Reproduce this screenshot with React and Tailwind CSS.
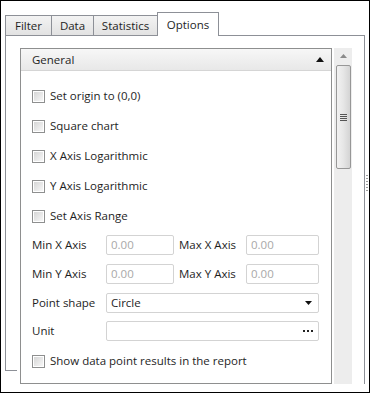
import React from 'react';

const font = { fontFamily: '"Open Sans", "Noto Sans", sans-serif' };

function Check({ label }) {
  return (
    <div className="flex items-center h-[30px]">
      <span className="w-[13px] h-[13px] border border-[#8e8f8f] bg-white p-[1px] shrink-0">
        <span className="block w-full h-full bg-gradient-to-br from-[#d6d6d6] to-[#f7f7f7]" />
      </span>
      <span className="ml-[5px] text-[#1e1e1e]">{label}</span>
    </div>
  );
}

function NumField({ width }) {
  return (
    <div className={`h-[20px] ${width} border border-[#d3d3d3] rounded-[2px] bg-white flex items-center pl-[4px] text-[#a8a8a8]`}>
      0.00
    </div>
  );
}

function Tab({ label, width, first }) {
  return (
    <div
      className={`h-[20px] ${width} ${first ? '' : '-ml-[1px]'} flex items-center justify-center bg-gradient-to-b from-[#f3f3f3] to-[#e2e2e2] border border-b-0 border-[#8d9097] text-[#1e1e1e]`}
    >
      {label}
    </div>
  );
}

export default function App() {
  return (
    <div
      className="w-[370px] h-[393px] border border-black bg-white pt-[9px] px-[4px] text-[11.5px] overflow-hidden relative"
      style={font}
    >
      <div className="flex items-end h-[25px]">
        <Tab label="Filter" width="w-[47px]" first />
        <Tab label="Data" width="w-[43px]" />
        <Tab label="Statistics" width="w-[65px]" />
        <div className="h-[24px] w-[62px] -ml-[1px] flex items-center justify-center bg-white border border-b-0 border-[#8d9097] -mb-[1px] relative z-10 text-[#1e1e1e]">
          Options
        </div>
      </div>

      <div className="relative w-[360px] h-[349px] border-t border-r border-[#8d9097] pl-[15px] pt-[12px] flex">
        <div className="absolute left-0 top-0 w-[12px] h-[335px] border-l border-b border-[#8d9097]" />

        <div className="w-[312px] h-[336px] border border-[#8e8f8f] flex flex-col bg-white">
          <div className="h-[22px] border-b border-[#d5d5d5] bg-gradient-to-b from-[#f7f7f7] to-[#e8e8e8] flex items-center justify-between pl-[11px] pr-[7px] text-[#1e1e1e]">
            <span>General</span>
            <svg width="8" height="5" viewBox="0 0 8 5">
              <path d="M0 5 L4 0 L8 5 Z" fill="#111" />
            </svg>
          </div>

          <div className="flex flex-col pl-[11px] pt-[10px]">
            <Check label="Set origin to (0,0)" />
            <Check label="Square chart" />
            <Check label="X Axis Logarithmic" />
            <Check label="Y Axis Logarithmic" />
            <Check label="Set Axis Range" />

            <div className="flex items-center mt-[4px] whitespace-nowrap">
              <span className="w-[74px] text-[#1e1e1e]">Min X Axis</span>
              <NumField width="w-[68px]" />
              <span className="w-[72px] pl-[5px] text-[#1e1e1e]">Max X Axis</span>
              <NumField width="w-[73px]" />
            </div>
            <div className="flex items-center mt-[9px] whitespace-nowrap">
              <span className="w-[74px] text-[#1e1e1e]">Min Y Axis</span>
              <NumField width="w-[68px]" />
              <span className="w-[72px] pl-[5px] text-[#1e1e1e]">Max Y Axis</span>
              <NumField width="w-[73px]" />
            </div>
            <div className="flex items-center mt-[9px]">
              <span className="w-[74px] text-[#1e1e1e]">Point shape</span>
              <div className="h-[20px] w-[213px] border border-[#d3d3d3] rounded-[2px] bg-white flex items-center justify-between pl-[4px] pr-[6px] text-[#1e1e1e]">
                <span>Circle</span>
                <svg width="7" height="4" viewBox="0 0 7 4">
                  <path d="M0 0 L7 0 L3.5 4 Z" fill="#111" />
                </svg>
              </div>
            </div>
            <div className="flex items-center mt-[8px]">
              <span className="w-[74px] text-[#1e1e1e]">Unit</span>
              <div className="h-[20px] w-[213px] border border-[#d3d3d3] rounded-[2px] bg-white flex items-center justify-end pr-[5px]">
                <span className="flex gap-[2px]">
                  <span className="w-[2px] h-[2px] bg-[#222]" />
                  <span className="w-[2px] h-[2px] bg-[#222]" />
                  <span className="w-[2px] h-[2px] bg-[#222]" />
                </span>
              </div>
            </div>
            <div className="mt-[5px]">
              <Check label="Show data point results in the report" />
            </div>
          </div>
        </div>

        <div className="ml-[2px] w-[18px] h-[336px] bg-[#ededed] flex flex-col items-center">
          <svg className="mt-[6px]" width="7" height="4" viewBox="0 0 7 4">
            <path d="M0 4 L3.5 0 L7 4 Z" fill="#8a8a8a" />
          </svg>
          <div className="mt-[7px] w-[15px] h-[104px] border border-[#979797] rounded-[2px] bg-gradient-to-r from-[#f2f2f2] via-[#e6e6e6] to-[#d4d4d4] flex flex-col items-center justify-center gap-[1px]">
            <span className="w-[7px] h-[1px] bg-[#555]" />
            <span className="w-[7px] h-[1px] bg-[#555]" />
            <span className="w-[7px] h-[1px] bg-[#555]" />
            <span className="w-[7px] h-[1px] bg-[#555]" />
          </div>
        </div>
      </div>

      <div className="absolute right-[1px] top-[174px] flex flex-col gap-[2px]">
        {[0, 1, 2, 3, 4, 5].map((i) => (
          <span key={i} className="w-[2px] h-[1px] bg-[#9a9a9a]" />
        ))}
      </div>
    </div>
  );
}
